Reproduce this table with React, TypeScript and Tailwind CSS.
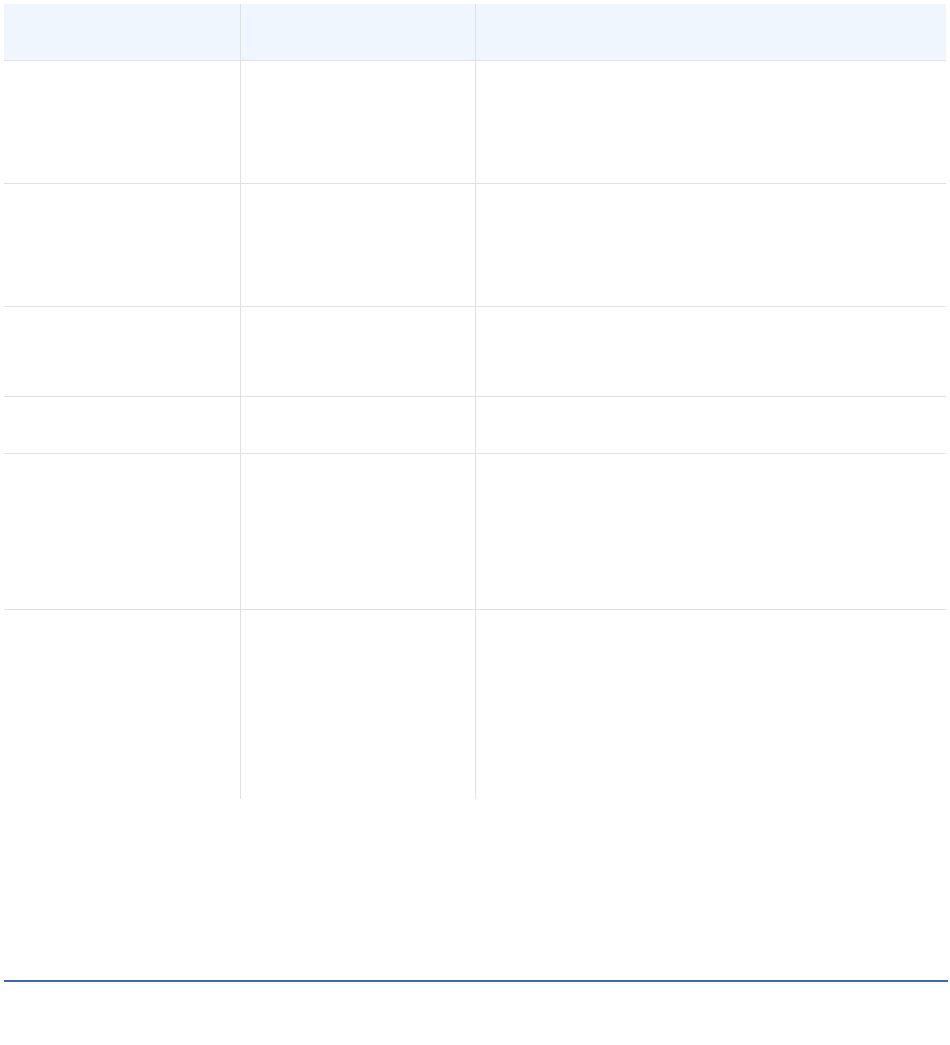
import React from "react";

const rows = [123, 123, 90, 57, 156, 189];

export default function App() {
  return (
    <div className="w-[950px] h-[1045px] bg-white p-1 font-['Liberation_Sans',sans-serif]">
      <div className="w-[942px] flex flex-col">
        <div className="flex h-[57px] bg-[#f0f6fe] border-b border-[#e3e1dd]">
          <div className="w-[237px] border-r border-[#e3e1dd]" />
          <div className="w-[235px] border-r border-[#e3e1dd]" />
          <div className="flex-1" />
        </div>
        {rows.map((h, i) => (
          <div
            key={i}
            className={
              "flex " + (i < rows.length - 1 ? "border-b border-[#e3e1dd]" : "")
            }
            style={{ height: h }}
          >
            <div className="w-[237px] border-r border-[#e3e1dd]" />
            <div className="w-[235px] border-r border-[#e3e1dd]" />
            <div className="flex-1" />
          </div>
        ))}
      </div>
      <div className="mt-[181px] w-[944px] h-[2px] bg-[#3f67ad]" />
    </div>
  );
}
